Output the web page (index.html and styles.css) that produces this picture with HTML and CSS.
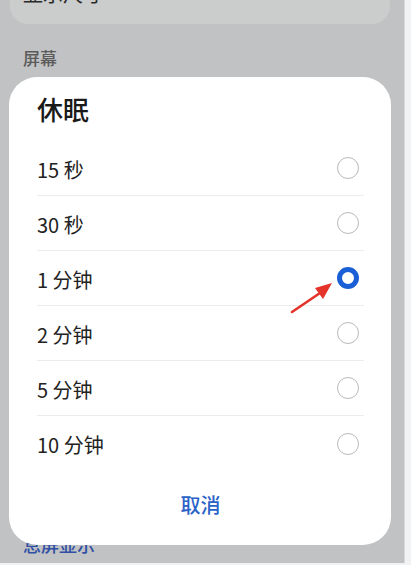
FILE: index.html
```html
<!DOCTYPE html>
<html>
<head>
<meta charset="utf-8">
<link rel="stylesheet" href="styles.css">
</head>
<body>
<div class="page">
  <div class="screen">
    <div class="topcard"><span class="topcard-text">显示尺寸</span></div>
    <div class="section-label">屏幕</div>
    <div class="under-link">息屏显示</div>

    <div class="dialog">
      <div class="dialog-title">休眠</div>
      <div class="options">
        <div class="option"><span class="opt-label">15 秒</span><span class="radio"></span></div>
        <div class="option"><span class="opt-label">30 秒</span><span class="radio"></span></div>
        <div class="option"><span class="opt-label">1 分钟</span><span class="radio checked"></span></div>
        <div class="option"><span class="opt-label">2 分钟</span><span class="radio"></span></div>
        <div class="option"><span class="opt-label">5 分钟</span><span class="radio"></span></div>
        <div class="option last"><span class="opt-label">10 分钟</span><span class="radio"></span></div>
      </div>
      <div class="cancel">取消</div>
    </div>

    <svg class="arrow" width="60" height="50" viewBox="0 0 60 50">
      <line x1="4" y1="41" x2="32" y2="22" stroke="#e5332a" stroke-width="2.6" stroke-linecap="round"/>
      <polygon points="44,12 27,17 35,28" fill="#e5332a"/>
    </svg>
  </div>
  <div class="edge"></div>
</div>
</body>
</html>
```

FILE: styles.css
```css
* { box-sizing: border-box; }
html, body {
  margin: 0;
  padding: 0;
  width: 411px;
  height: 565px;
  overflow: hidden;
  background: #f1f2f4;
  font-family: "Noto Sans CJK SC", "Noto Sans", sans-serif;
}
.page {
  display: flex;
  width: 411px;
  height: 563px;
}
.screen {
  position: relative;
  width: 404px;
  height: 563px;
  background: #c1c2c3;
  overflow: hidden;
}
.edge {
  flex: 1;
  background: #f1f2f4;
  border-left: 1px solid #dadbdd;
}
.topcard {
  margin: 0 14px 0 10px;
  height: 24px;
  background: #cbcccc;
  border-radius: 0 0 18px 18px;
  position: relative;
  overflow: hidden;
}
.topcard-text {
  display: block;
  margin-top: -18px;
  margin-left: 13px;
  font-size: 20px;
  line-height: 24px;
  color: #2a2a2a;
}
.section-label {
  margin: 22px 0 0 23px;
  font-size: 17px;
  line-height: 24px;
  color: #5b5b5b;
  font-weight: 500;
}
.under-link {
  margin: 463px 0 0 23px;
  font-size: 18px;
  line-height: 22px;
  color: #2e4fa3;
  font-weight: 500;
}
.dialog {
  position: absolute;
  left: 9px;
  top: 77px;
  width: 382px;
  height: 468px;
  background: #ffffff;
  border-radius: 28px;
  padding: 16px 27px 16px 28px;
  display: flex;
  flex-direction: column;
}
.dialog-title {
  font-size: 26px;
  line-height: 32px;
  color: #1a1a1a;
  font-weight: 500;
  margin-bottom: 16px;
}
.options {
  display: flex;
  flex-direction: column;
}
.option {
  height: 55px;
  display: flex;
  align-items: center;
  justify-content: space-between;
  border-bottom: 1px solid #ececec;
}
.option.last {
  border-bottom: none;
}
.opt-label {
  font-size: 20px;
  color: #222222;
  margin-top: 2px;
}
.radio {
  width: 22px;
  height: 22px;
  border-radius: 50%;
  border: 1.5px solid #b9b9b9;
  margin-right: 5px;
}
.radio.checked {
  border: 5px solid #1a5fd6;
}
.cancel {
  margin-top: 8px;
  height: 50px;
  display: flex;
  align-items: center;
  justify-content: center;
  font-size: 20px;
  color: #2a62c8;
  font-weight: 500;
}
.arrow {
  position: absolute;
  left: 288px;
  top: 271px;
}
```
